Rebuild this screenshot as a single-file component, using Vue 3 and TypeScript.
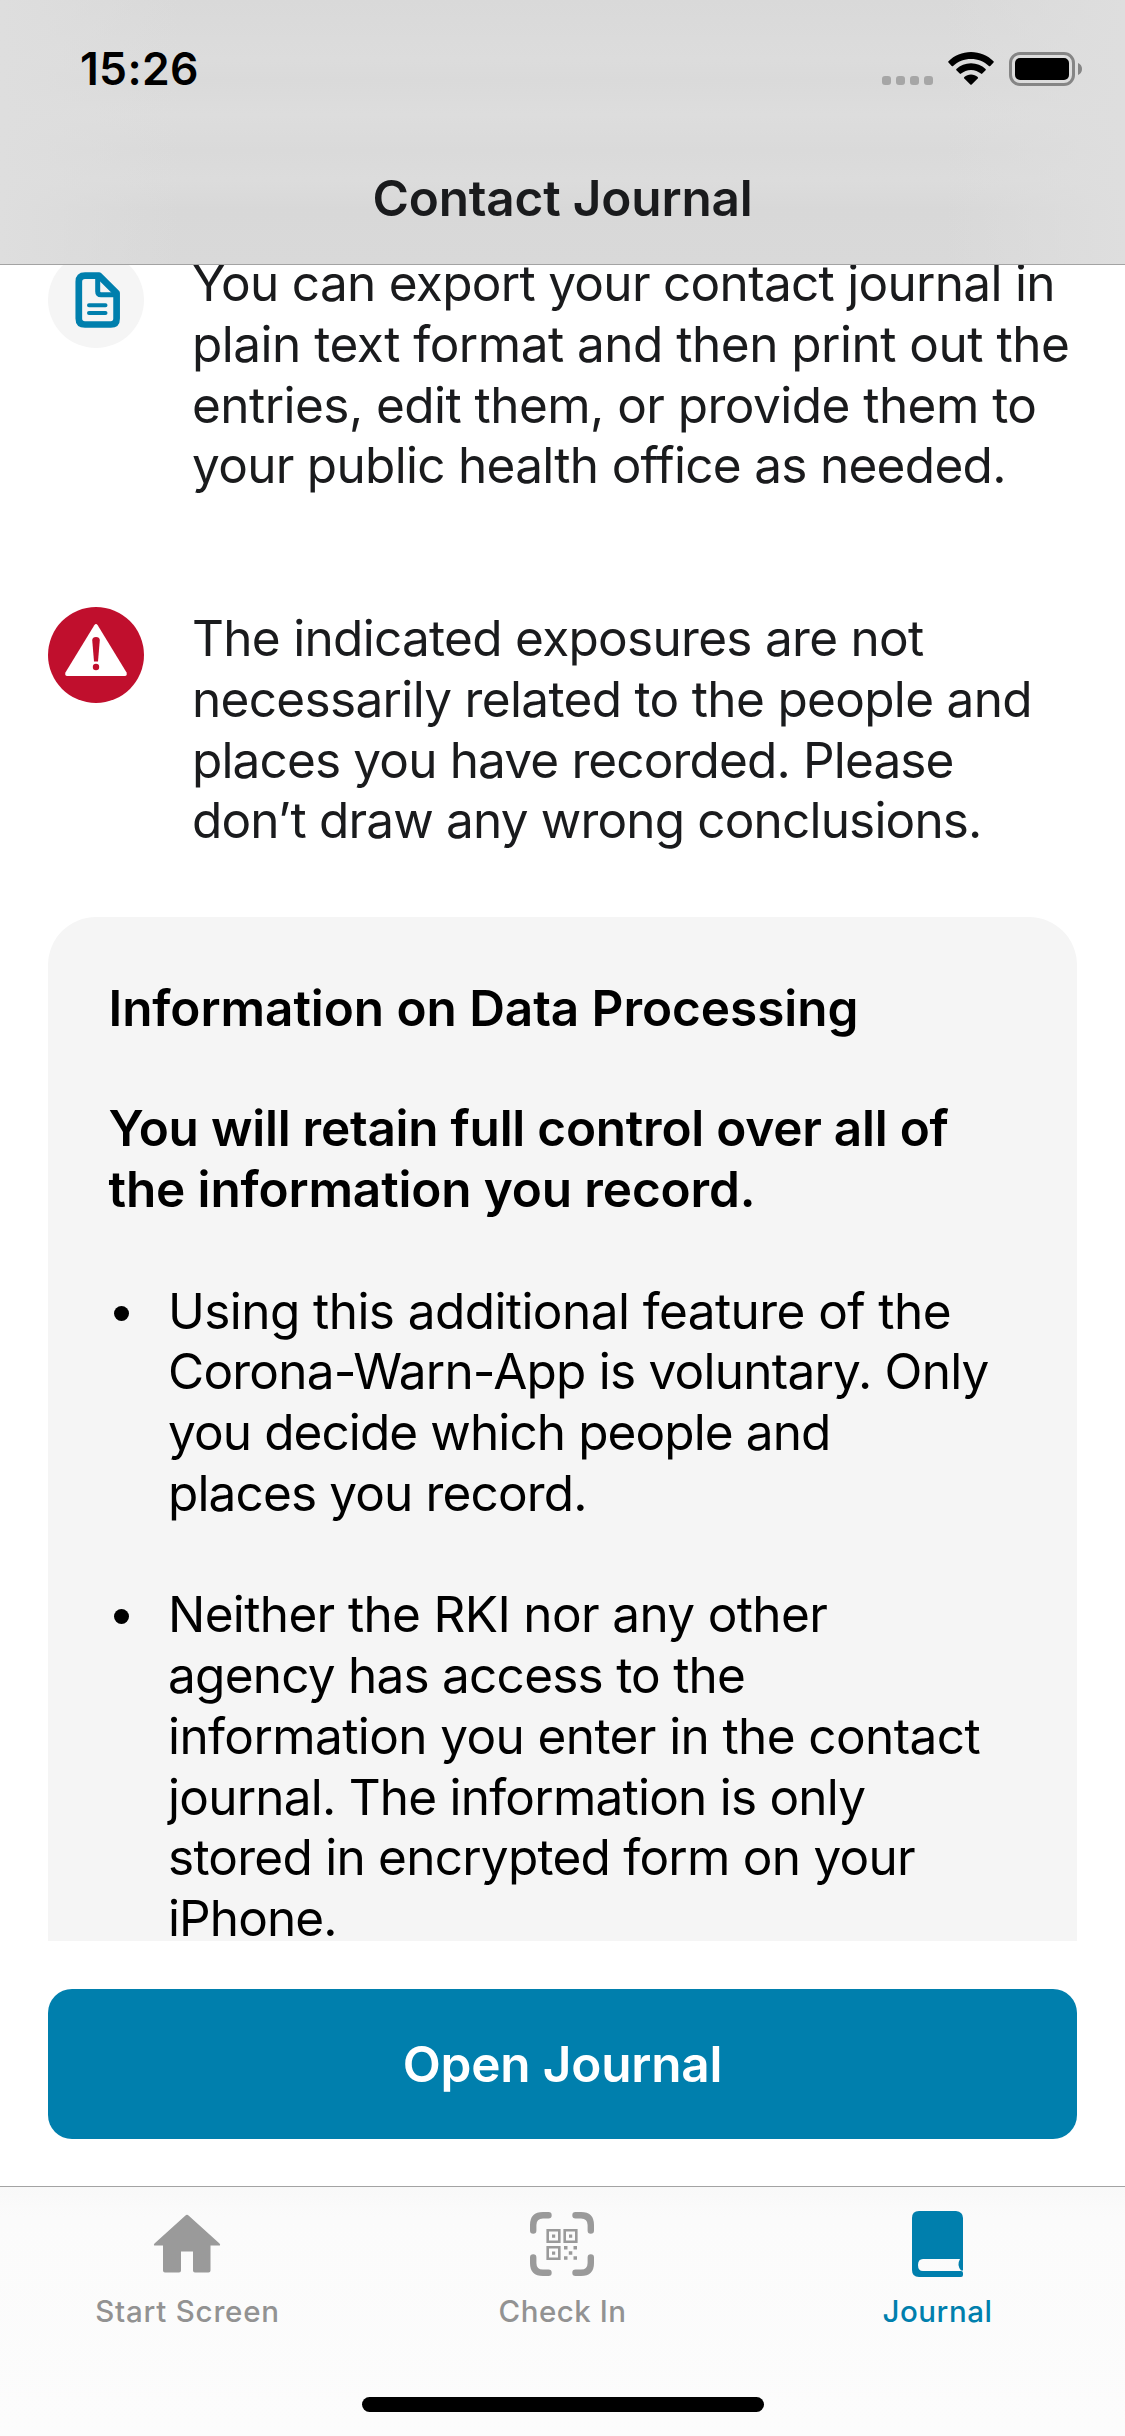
<script setup lang="ts">
interface Line {
  text: string
  // letter spacing in px
  track: number
}

const exportLines: Line[] = [
  { text: 'You can export your contact journal in', track: -0.7 },
  { text: 'plain text format and then print out the', track: -0.5 },
  { text: 'entries, edit them, or provide them to', track: -0.54 },
  { text: 'your public health office as needed.', track: -0.7 },
]

const exposureLines: Line[] = [
  { text: 'The indicated exposures are not', track: -0.7 },
  { text: 'necessarily related to the people and', track: -0.67 },
  { text: 'places you have recorded. Please', track: -0.85 },
  { text: 'don’t draw any wrong conclusions.', track: -0.83 },
]

const headline: Line[] = [{ text: 'Information on Data Processing', track: -0.06 }]
const promise: Line[] = [
  { text: 'You will retain full control over all of', track: -0.24 },
  { text: 'the information you record.', track: -0.14 },
]

const bullets: Line[][] = [
  [
    { text: 'Using this additional feature of the', track: -0.57 },
    { text: 'Corona-Warn-App is voluntary. Only', track: -0.77 },
    { text: 'you decide which people and', track: -0.9 },
    { text: 'places you record.', track: -0.86 },
  ],
  [
    { text: 'Neither the RKI nor any other', track: -0.64 },
    { text: 'agency has access to the', track: -0.76 },
    { text: 'information you enter in the contact', track: -0.6 },
    { text: 'journal. The information is only', track: -0.77 },
    { text: 'stored in encrypted form on your', track: -0.75 },
    { text: 'iPhone.', track: -0.9 },
  ],
]

const spacing = (l: Line) => ({ letterSpacing: `${l.track}px` })
</script>

<template>
  <div class="screen">
    <header class="top">
      <div class="status">
        <span class="time">15:26</span>
        <div class="indicators">
          <div class="cell"><i v-for="n in 4" :key="n"></i></div>
          <svg class="wifi" width="46" height="34" viewBox="0 0 46 34">
            <path d="M23 0C31.700 0 39.700 3.500 45.500 9.200Q46.100 9.900 45.500 10.600L42.300 13.900Q41.600 14.500 40.900 13.900C36.200 9.500 29.900 6.900 23 6.900S9.800 9.500 5.100 13.900Q4.400 14.500 3.700 13.900L.5 10.600Q-.1 9.900 .5 9.200C6.300 3.500 14.300 0 23 0Z" />
            <path d="M23 11.200C28.600 11.200 33.700 13.300 37.600 16.900Q38.200 17.600 37.600 18.300L34.300 21.600Q33.600 22.200 32.900 21.600C30.300 19.300 26.800 17.900 23 17.900S15.700 19.300 13.100 21.600Q12.400 22.200 11.700 21.600L8.400 18.300Q7.800 17.600 8.400 16.900C12.300 13.300 17.400 11.200 23 11.200Z" />
            <path d="M23 22.500C25.500 22.500 27.900 23.400 29.700 24.900Q30.400 25.600 29.700 26.400L23.700 32.500Q23 33.200 22.300 32.500L16.300 26.400Q15.600 25.600 16.300 24.900C18.100 23.400 20.500 22.500 23 22.500Z" />
          </svg>
          <svg class="battery" width="74" height="34" viewBox="0 0 74 34">
            <rect x="1.500" y="1.500" width="63" height="31" rx="9.500" fill="none" stroke="#858585" stroke-width="3" />
            <rect x="6" y="6" width="54" height="22" rx="5" />
            <path d="M69 11C71.500 12 73 14.300 73 17S71.500 22 69 23Z" fill="#858585" />
          </svg>
        </div>
      </div>
      <h1 class="title">Contact Journal</h1>
    </header>

    <main class="content">
      <section class="item first">
        <svg class="badge" width="96" height="96" viewBox="0 0 96 96">
          <circle cx="48" cy="48" r="48" fill="#f5f5f5" />
          <path d="M37 23.600H51L68.600 41.200V66.500Q68.600 72.500 62.800 72.500H37Q30.800 72.500 30.800 66.500V29.800Q30.800 23.600 37 23.600Z" fill="none" stroke="#007fad" stroke-width="6.700" stroke-linejoin="round" />
          <path d="M49.700 23V39.500Q49.700 42.800 53 42.800H69" fill="none" stroke="#007fad" stroke-width="5" />
          <path d="M41 53.300H57.500M41 61H57.500" stroke="#007fad" stroke-width="4" stroke-linecap="round" />
        </svg>
        <p class="body"><span v-for="l in exportLines" :key="l.text" class="line" :style="spacing(l)">{{ l.text }}</span></p>
      </section>

      <section class="item second">
        <svg class="badge" width="96" height="96" viewBox="0 0 96 96">
          <circle cx="48" cy="48" r="48" fill="#c00f2d" />
          <path d="M46.300 18.300Q48 15.800 49.700 18.300L78.400 65.300Q79.700 69 76.800 69H19.200Q16.300 69 17.600 65.300Z" fill="#fff" />
          <path d="M44.200 33Q44.500 30 48 30T51.800 33L50 54.500H46Z" fill="#c00f2d" />
          <circle cx="48" cy="60" r="3.200" fill="#c00f2d" />
        </svg>
        <p class="body"><span v-for="l in exposureLines" :key="l.text" class="line" :style="spacing(l)">{{ l.text }}</span></p>
      </section>

      <section class="card">
        <h2><span v-for="l in headline" :key="l.text" class="line" :style="spacing(l)">{{ l.text }}</span></h2>
        <h3><span v-for="l in promise" :key="l.text" class="line" :style="spacing(l)">{{ l.text }}</span></h3>
        <ul>
          <li v-for="(b, i) in bullets" :key="i">
            <i class="dot"></i>
            <p><span v-for="l in b" :key="l.text" class="line" :style="spacing(l)">{{ l.text }}</span></p>
          </li>
        </ul>
      </section>
    </main>

    <div class="action">
      <button type="button">Open Journal</button>
    </div>

    <nav class="tabs">
      <a class="tab start">
        <svg width="72" height="72" viewBox="0 0 72 72">
          <path d="M34.200 7.700Q36 6 37.800 7.700L68.500 35.500Q70 37.500 68 37.500H59.500V62.500Q59.500 64.500 57.500 64.500H44Q42 64.500 42 62.500V43.500H30V62.500Q30 64.500 28 64.500H14Q12 64.500 12 62.500V37.500H4Q2 37.500 3.500 35.500Z" />
        </svg>
        <span>Start Screen</span>
      </a>
      <a class="tab checkin">
        <svg width="72" height="72" viewBox="0 0 72 72">
          <g fill="none" stroke="#9a9a9a" stroke-width="6.400" stroke-linecap="round">
            <path d="M22.500 7.200H17Q7.200 7.200 7.200 17V22.500M49.500 7.200H55Q64.800 7.200 64.800 17V22.500M22.500 64.800H17Q7.200 64.800 7.200 55V49.500M49.500 64.800H55Q64.800 64.800 64.800 55V49.500" />
          </g>
          <g fill="none" stroke="#9a9a9a" stroke-width="2.600">
            <path d="M21.700 22.200H33.300V33.800H21.700ZM38.700 22.200H50.300V33.800H38.700ZM21.700 39.200H33.300V50.800H21.700Z" />
          </g>
          <path d="M26 26.500h3.200v3.200h-3.200zM43 26.500h3.200v3.200h-3.200zM26 43.500h3.200v3.200h-3.200zM38 38h3.500v3.500H38zM47.500 38H51v3.500h-3.500zM42.800 43.300h3.500v3.500h-3.500zM38 48.200h3.500v3.500H38zM47.500 48.200H51v3.500h-3.500z" />
        </svg>
        <span>Check In</span>
      </a>
      <a class="tab journal active">
        <svg width="72" height="72" viewBox="0 0 72 72">
          <path fill-rule="evenodd" d="M17 3H55Q62 4 62 10V62.500H60Q55.500 57 59 51H22Q17 51 17 57T22 63H60Q62 63 62 65V67Q62 69 60 69H18Q11 69 11 62V10Q11 3 18 3Z" />
        </svg>
        <span>Journal</span>
      </a>
      <div class="home"></div>
    </nav>
  </div>
</template>

<style>
html,
body {
  margin: 0;
  background: #fff;
}
</style>

<style scoped>
.screen {
  width: 1125px;
  height: 2436px;
  display: flex;
  flex-direction: column;
  overflow: hidden;
  background: #fff;
  color: #1a1b1d;
  font-family: Inter, "Liberation Sans", sans-serif;
  font-size: 49.5px;
  line-height: 60.75px;
}
h1, h2, h3, p, ul { margin: 0; padding: 0; }
.line { display: block; white-space: nowrap; }

.top {
  position: relative;
  z-index: 1;
  flex: none;
  box-sizing: border-box;
  height: 265px;
  border-bottom: 1px solid #a3a3a3;
  background:
    linear-gradient(90deg, #dedede 0, #dedede00 180px, #dedede00 945px, #dedede 100%),
    linear-gradient(#d9d9d9 0, #dcdcdc 60px, #dadada 80px, #dddddd 115px, #dadada 150px, #dcdcdc 180px, #d8d8d8 210px, #d9d9d9 100%);
}
.status {
  display: flex;
  justify-content: space-between;
  height: 132px;
  padding: 0 42px 0 80px;
}
.time {
  margin-top: 39px;
  color: #000;
  font-size: 44.5px;
  font-weight: 600;
  letter-spacing: 0.3px;
}
.indicators { display: flex; align-items: flex-end; height: 86px; }
.cell { display: flex; gap: 5px; margin: 0 15px 1px 0; }
.cell i { width: 9px; height: 9px; border-radius: 3px; background: #a6a6a6; }
.wifi { display: block; margin-right: 15px; }
.battery { display: block; }
.title {
  margin-top: 36px;
  text-align: center;
  font-size: 49.5px;
  font-weight: 600;
  letter-spacing: -0.18px;
}

.content { flex: none; height: 1676px; overflow: hidden; }
.item { display: flex; gap: 48px; padding: 0 48px; }
.first { margin: -13px 0 111px; }
.second { margin-bottom: 66px; }
.badge { flex: none; display: block; }
.body { padding-top: 1px; }

.card {
  margin: 0 48px;
  padding: 61px 60px;
  border-radius: 48px;
  background: #f5f5f5;
  color: #000;
}
h2, h3 { font-size: 49.5px; font-weight: 600; }
h2 { margin: 0 0 59.5px 0.5px; }
h3 { margin: 0 0 60.75px 0.5px; }
ul { list-style: none; }
li { display: flex; margin-bottom: 60.75px; }
.dot { flex: none; width: 15px; height: 15px; margin: 25px 39.5px 0 5.5px; border-radius: 50%; background: #000; }

.action { flex: none; height: 245px; padding: 48px; box-sizing: border-box; }
button {
  display: block;
  width: 1029px;
  height: 150px;
  padding: 0;
  border: 0;
  border-radius: 24px;
  background: #007fad;
  color: #fff;
  font: 600 49.5px/150px Inter, "Liberation Sans", sans-serif;
  letter-spacing: -0.2px;
}

.tabs {
  position: relative;
  flex: 1;
  display: flex;
  border-top: 1px solid #a3a3a3;
  background: linear-gradient(#f8f8f8, #fbfbfb 30px, #fcfcfc);
}
.tab {
  flex: 1;
  display: flex;
  flex-direction: column;
  align-items: center;
  padding-top: 21px;
  color: #929292;
  font-size: 29.5px;
  font-weight: 500;
  line-height: 36px;
}
.tab svg { display: block; fill: #9a9a9a; margin: 0 1px 13px 0; }
.start { letter-spacing: 0.8px; }
.checkin { letter-spacing: 0.5px; }
.journal { letter-spacing: 0.55px; }
.tab.active { color: #007fad; }
.tab.active svg { fill: #007fad; }
.home {
  position: absolute;
  left: 362px;
  top: 210px;
  width: 402px;
  height: 15px;
  border-radius: 8px;
  background: #000;
}
</style>
